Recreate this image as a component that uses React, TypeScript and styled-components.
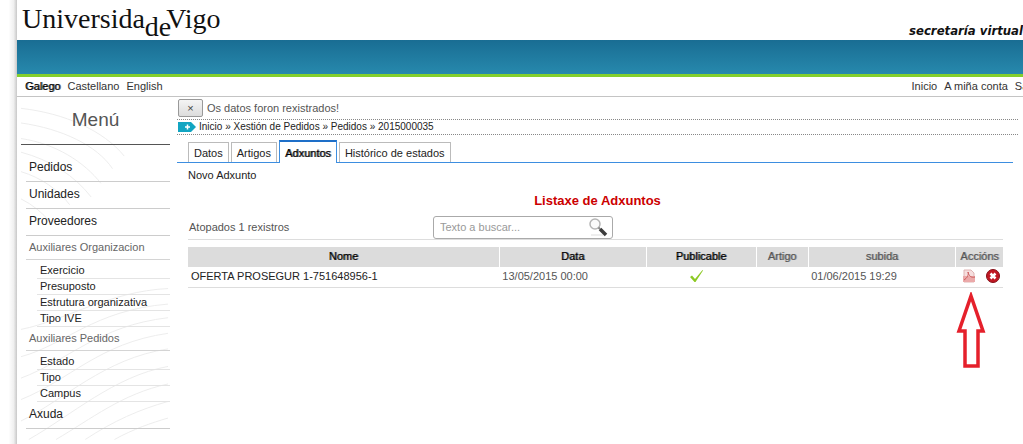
import React from "react";
import styled, { createGlobalStyle } from "styled-components";

const Global = createGlobalStyle`
  * { box-sizing: border-box; }
  body { margin: 0; background: #fff; color: #555; font: 11px/16px "Liberation Sans", Arial, sans-serif; overflow: hidden; }
  a { color: #222; text-decoration: none; }
  ul { list-style: none; margin: 0; padding: 0; }
`;

const Frame = styled.div`
  display: grid;
  grid-template-columns: 17px minmax(0, 1fr);
  min-height: 100vh;
  overflow: hidden;
`;
const Edge = styled.div`background: linear-gradient(90deg, #fff 50%, #f0f0f0 80%, #c8c8c8);`;
const Page = styled.div`display: flex; flex-direction: column;`;

const Header = styled.header`
  display: flex;
  justify-content: space-between;
  height: 40px;
  white-space: nowrap;
`;
const Logo = styled.a`
  display: flex;
  padding: 2px 0 0 5px;
  font: 28px/34px "Liberation Serif", serif;
  color: #111;
`;
const LogoDrop = styled.span`padding-top: 8px;`;
const LogoEnd = styled.span`margin-left: -5px;`;
const Site = styled.span`
  align-self: flex-end;
  font: italic bold 13px/18px "DejaVu Sans Condensed", "DejaVu Sans", sans-serif;
  color: #111;
`;
const Banner = styled.div`
  height: 37px;
  background: linear-gradient(#196d93, #2789ad);
  border-bottom: 3px solid #84cf2d;
`;
const TopNav = styled.nav`
  display: flex;
  justify-content: space-between;
  height: 20px;
  padding: 1px 0 0 8px;
  border-bottom: 1px solid #c4c4c4;
  white-space: nowrap;
`;
const Links = styled.div<{ $bleed?: boolean }>`
  display: flex;
  gap: 7px;
  margin-right: ${(p) => (p.$bleed ? "-12px" : "0")};
`;
const NavLink = styled.a<{ $on?: boolean }>`
  color: ${(p) => (p.$on ? "#000" : "#333")};
  text-shadow: ${(p) => (p.$on ? "1px 0 #666" : "none")};
`;

const Body = styled.div`display: grid; grid-template-columns: 160px minmax(0, 1fr); flex: 1;`;

const Side = styled.aside`
  display: grid;
  grid-template-columns: minmax(0, 1fr);
  padding: 0 7px 0 4px;
  & > * { grid-area: 1 / 1; }
`;
const Waves = styled.svg`
  width: 100%;
  height: 347px;
  fill: none;
  stroke: #ececec;
`;
const SideTitle = styled.h2`
  margin: 0 0 10px;
  padding: 11px 0 12px;
  font-size: 19px;
  line-height: 24px;
  font-weight: normal;
  text-align: center;
  border-bottom: 1px solid #555;
`;
const MenuList = styled.ul`padding-left: 5px;`;
const MenuItem = styled.li`
  padding: 4px 0 6px 3px;
  font-size: 12px;
  line-height: 16px;
  border-bottom: 1px solid #ccc;
`;
const MenuGroup = styled.li``;
const GroupName = styled.div`
  padding: 3px 0 3px 3px;
  line-height: 17px;
  color: #666;
  border-bottom: 1px solid #d4d4d4;
`;
const SubList = styled.ul`padding: 3px 0 0 11px;`;
const SubItem = styled.li`
  padding-left: 3px;
  line-height: 15px;
  border-bottom: 1px solid #e4e4e4;
`;

const Main = styled.main`padding: 0 5px 0 0;`;
const Notice = styled.div`
  display: flex;
  align-items: center;
  gap: 4px;
  height: 23px;
  padding-left: 1px;
  border-bottom: 1px dotted #888;
`;
const Close = styled.button`
  width: 25px;
  height: 18px;
  padding: 0;
  border: 1px solid #999;
  border-radius: 2px;
  background: linear-gradient(#f4f4f4, #dcdcdc);
  font: 11px/14px "Liberation Sans", Arial, sans-serif;
  color: #444;
`;
const Crumbs = styled.nav`
  display: flex;
  align-items: center;
  gap: 3px;
  height: 15px;
  padding-left: 1px;
  font-size: 10px;
  line-height: 14px;
  border-bottom: 1px dotted #888;
  color: #222;
`;
const Tabs = styled.div`
  display: flex;
  align-items: flex-end;
  gap: 2px;
  height: 28px;
  margin-right: 5px;
  padding-left: 11px;
  border-bottom: 1px solid #3d8ee0;
`;
const Tab = styled.a<{ $on?: boolean }>`
  padding: ${(p) => (p.$on ? "3px 5px 2px" : "2px 5px 1px")};
  margin-bottom: ${(p) => (p.$on ? "-1px" : "0")};
  border: 1px solid ${(p) => (p.$on ? "#3d8ee0" : "#bbb")};
  border-top: ${(p) => (p.$on ? "2px solid #1e6fc8" : "1px solid #bbb")};
  border-bottom: 0;
  background: #fff;
  color: ${(p) => (p.$on ? "#000" : "#222")};
  text-shadow: ${(p) => (p.$on ? "1px 0 #666" : "none")};
`;
const Panel = styled.section`padding: 4px 15px 0 11px;`;
const Title = styled.h1`
  margin: 8px 0 4px;
  padding-left: 4px;
  font-size: 13px;
  line-height: 20px;
  font-weight: bold;
  text-align: center;
  color: #c00;
`;
const Tools = styled.form`
  display: grid;
  grid-template-columns: 244px 180px;
  align-items: center;
  height: 25px;
  padding-left: 1px;
  border-bottom: 1px solid #ddd;
`;
const SearchBox = styled.label`
  display: flex;
  align-items: center;
  height: 23px;
  padding: 0 4px 0 6px;
  border: 1px solid #aaa;
  border-radius: 3px;
`;
const SearchInput = styled.input`
  flex: 1;
  min-width: 0;
  padding: 0;
  border: 0;
  outline: 0;
  background: none;
  font: inherit;
  &::placeholder { color: #999; opacity: 1; }
`;
const Table = styled.table`
  width: 100%;
  margin-top: 7px;
  table-layout: fixed;
  border-collapse: collapse;
`;
const Th = styled.th<{ $dim?: boolean }>`
  height: 20px;
  padding: 0 0 2px;
  background: #dcdcdc;
  font-weight: normal;
  color: ${(p) => (p.$dim ? "#555" : "#000")};
  text-shadow: 1px 0 ${(p) => (p.$dim ? "#999" : "#666")};
  & + & { border-left: 1px solid #fff; }
`;
const Td = styled.td<{ $dark?: boolean }>`
  height: 20px;
  padding: 0 3px 1px;
  border-bottom: 1px solid #ddd;
  color: ${(p) => (p.$dark ? "#222" : "#555")};
  white-space: nowrap;
`;
const Centered = styled.div`display: flex; justify-content: center; padding-right: 8px;`;
const Actions = styled.div`display: flex; justify-content: space-between; padding-left: 3px;`;
const IconButton = styled.button`display: flex; padding: 0; border: 0; background: none;`;
const Pointer = styled.svg`display: block; margin: 4px 17px 0 auto;`;

const columns = [
  { name: "Nome", width: "38.2%" },
  { name: "Data", width: "18%" },
  { name: "Publicable", width: "13.5%" },
  { name: "Artigo", width: "6.4%", dim: true },
  { name: "subida", width: "18.1%", dim: true },
  { name: "Accións", width: "5.8%", dim: true },
];

export default function App() {
  return (
    <Frame>
      <Global />
      <Edge />
      <Page>
        <Header>
          <Logo href="#">
            <span>Universida</span>
            <LogoDrop>de</LogoDrop>
            <LogoEnd>Vigo</LogoEnd>
          </Logo>
          <Site>secretaría virtual</Site>
        </Header>
        <Banner />
        <TopNav>
          <Links>
            <NavLink href="#" $on>Galego</NavLink>
            <NavLink href="#">Castellano</NavLink>
            <NavLink href="#">English</NavLink>
          </Links>
          <Links $bleed>
            <NavLink href="#">Inicio</NavLink>
            <NavLink href="#">A miña conta</NavLink>
            <NavLink href="#">Saír</NavLink>
          </Links>
        </TopNav>
        <Body>
          <Side>
            <Waves viewBox="0 0 153 347" aria-hidden="true">
              <path d="M0 7C45 12 85 30 106 56M0 22C42 28 78 45 94 69M0 38C35 43 65 62 82 84M0 52C30 60 55 76 72 98M0 72C20 78 38 90 50 106M0 100C12 106 22 114 30 124" />
              <path d="M0 234C45 225 90 195 151 192M0 262C45 250 75 214 151 208M0 284C48 266 80 230 151 222M0 306C50 286 80 248 151 238M0 328C45 306 85 264 151 254M8 347C52 322 96 282 151 272M36 347C72 326 104 300 151 290M66 347C95 328 122 316 151 308M96 347C116 336 134 330 151 325" />
            </Waves>
            <nav>
              <SideTitle>Menú</SideTitle>
              <MenuList>
                <MenuItem><a href="#">Pedidos</a></MenuItem>
                <MenuItem><a href="#">Unidades</a></MenuItem>
                <MenuItem><a href="#">Proveedores</a></MenuItem>
                <MenuGroup>
                  <GroupName>Auxiliares Organizacion</GroupName>
                  <SubList>
                    {["Exercicio", "Presuposto", "Estrutura organizativa", "Tipo IVE"].map((t) => (
                      <SubItem key={t}><a href="#">{t}</a></SubItem>
                    ))}
                  </SubList>
                </MenuGroup>
                <MenuGroup>
                  <GroupName>Auxiliares Pedidos</GroupName>
                  <SubList>
                    {["Estado", "Tipo", "Campus"].map((t) => (
                      <SubItem key={t}><a href="#">{t}</a></SubItem>
                    ))}
                  </SubList>
                </MenuGroup>
                <MenuItem><a href="#">Axuda</a></MenuItem>
              </MenuList>
            </nav>
          </Side>
          <Main>
            <Notice>
              <Close type="button" aria-label="Pechar">×</Close>
              <span>Os datos foron rexistrados!</span>
            </Notice>
            <Crumbs>
              <svg width="18" height="10" viewBox="0 0 18 10" aria-hidden="true">
                <path d="M0 0H13L18 5L13 10H0Z" fill="#12a5c2" />
                <path d="M7 5H12M9.500 2.500V7.500" stroke="#fff" strokeWidth="1.500" />
              </svg>
              <span>
                <a href="#">Inicio</a> » <a href="#">Xestión de Pedidos</a> » <a href="#">Pedidos</a> » <a href="#">2015000035</a>
              </span>
            </Crumbs>
            <Tabs>
              <Tab href="#">Datos</Tab>
              <Tab href="#">Artigos</Tab>
              <Tab href="#" $on>Adxuntos</Tab>
              <Tab href="#">Histórico de estados</Tab>
            </Tabs>
            <Panel>
              <a href="#">Novo Adxunto</a>
              <Title>Listaxe de Adxuntos</Title>
              <Tools>
                <span>Atopados 1 rexistros</span>
                <SearchBox>
                  <SearchInput type="text" placeholder="Texto a buscar..." aria-label="Texto a buscar" />
                  <svg width="20" height="20" viewBox="0 0 20 20" fill="none" aria-hidden="true">
                    <path d="M3 18H15" stroke="#ddd" />
                    <circle cx="7" cy="7" r="5" stroke="#b5b5b5" strokeWidth="1.500" fill="#fafafa" />
                    <path d="M10.500 10.500L12 12" stroke="#888" strokeWidth="2" />
                    <path d="M12 12L18 18" stroke="#3c3c3c" strokeWidth="3.500" />
                  </svg>
                </SearchBox>
              </Tools>
              <Table>
                <colgroup>
                  {columns.map((c) => <col key={c.name} width={c.width} />)}
                </colgroup>
                <thead>
                  <tr>{columns.map((c) => <Th key={c.name} $dim={c.dim}>{c.name}</Th>)}</tr>
                </thead>
                <tbody>
                  <tr>
                    <Td $dark>OFERTA PROSEGUR 1-751648956-1</Td>
                    <Td>13/05/2015 00:00</Td>
                    <Td>
                      <Centered>
                        <svg width="14" height="14" viewBox="0 0 14 14" role="img" aria-label="Si">
                          <path d="M0 8L2 6.500L5 10L12.500 1L13 1.500L5.500 13H4.500Z" fill="#8cc924" />
                        </svg>
                      </Centered>
                    </Td>
                    <Td />
                    <Td>01/06/2015 19:29</Td>
                    <Td>
                      <Actions>
                        <IconButton type="button" aria-label="PDF">
                          <svg width="14" height="14" viewBox="0 0 14 14" fill="none">
                            <path d="M2 1H9L12 4V13H2Z" fill="#f6dede" stroke="#dfb4b4" />
                            <path d="M1 7H13V13H1Z" fill="#eba9a9" />
                            <path d="M2 11C5 9 7 6 6 3C7 7 9 9 13 8" stroke="#cb5c5c" />
                          </svg>
                        </IconButton>
                        <IconButton type="button" aria-label="Eliminar">
                          <svg width="14" height="14" viewBox="0 0 14 14">
                            <circle cx="7" cy="7" r="6.500" fill="#c01722" stroke="#851018" />
                            <path d="M4.500 4.500L9.500 9.500M9.500 4.500L4.500 9.500" stroke="#fff" strokeWidth="2.500" />
                          </svg>
                        </IconButton>
                      </Actions>
                    </Td>
                  </tr>
                </tbody>
              </Table>
              <Pointer width="30" height="78" viewBox="0 0 30 78" fill="none" aria-hidden="true">
                <path d="M15 4L27 39H22V74H9V39H3Z" stroke="#e5202b" strokeWidth="3.500" />
              </Pointer>
            </Panel>
          </Main>
        </Body>
      </Page>
    </Frame>
  );
}
